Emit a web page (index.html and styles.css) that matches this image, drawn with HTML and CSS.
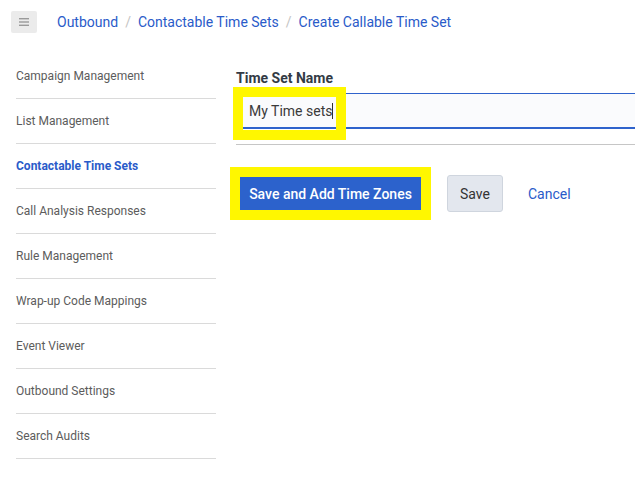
FILE: index.html
```html
<!DOCTYPE html>
<html>
<head>
<meta charset="utf-8">
<link rel="stylesheet" href="styles.css">
</head>
<body>
<header class="topbar">
  <button class="menu-btn" aria-label="menu">
    <svg width="10" height="8" viewBox="0 0 10 8"><rect x="0" y="0" width="10" height="1.4" fill="#9a9a9a"/><rect x="0" y="3.3" width="10" height="1.4" fill="#9a9a9a"/><rect x="0" y="6.6" width="10" height="1.4" fill="#9a9a9a"/></svg>
  </button>
  <nav class="crumbs">
    <a>Outbound</a><span class="sep">/</span><a>Contactable Time Sets</a><span class="sep">/</span><a>Create Callable Time Set</a>
  </nav>
</header>
<div class="layout">
  <aside class="sidebar">
    <div class="nav-item">Campaign Management</div>
    <div class="nav-item">List Management</div>
    <div class="nav-item active">Contactable Time Sets</div>
    <div class="nav-item">Call Analysis Responses</div>
    <div class="nav-item">Rule Management</div>
    <div class="nav-item">Wrap-up Code Mappings</div>
    <div class="nav-item">Event Viewer</div>
    <div class="nav-item">Outbound Settings</div>
    <div class="nav-item">Search Audits</div>
  </aside>
  <main class="main">
    <section class="form-section">
      <div class="label">Time Set Name</div>
      <div class="field">
        <span class="value">My Time sets<span class="caret"></span></span>
        <span class="hl-box"></span>
      </div>
    </section>
    <div class="actions">
      <button class="btn primary">Save and Add Time Zones</button>
      <button class="btn secondary">Save</button>
      <button class="btn link">Cancel</button>
    </div>
  </main>
</div>
</body>
</html>
```
FILE: styles.css
```css
* { box-sizing: border-box; }
body {
  margin: 0;
  font-family: Roboto, "Liberation Sans", sans-serif;
  background: #fff;
  color: #333;
  width: 635px;
  overflow: hidden;
}
.topbar {
  display: flex;
  align-items: center;
  height: 43px;
  padding: 0 11px;
  gap: 20px;
}
.menu-btn {
  width: 26px;
  height: 22px;
  border: none;
  border-radius: 2px;
  background: #ebebeb;
  display: flex;
  align-items: center;
  justify-content: center;
  padding: 0;
}
.menu-btn svg { display: block; }
.crumbs {
  font-size: 14px;
  color: #2a5bc9;
  display: flex;
  align-items: center;
  white-space: nowrap;
}
.crumbs a { color: #2a5bc9; }
.crumbs .sep {
  color: #c4c4c4;
  margin: 0 7px;
}
.layout {
  display: flex;
  padding-top: 11px;
  gap: 20px;
}
.sidebar {
  width: 216px;
  flex: none;
  padding-left: 16px;
}
.nav-item {
  height: 45px;
  display: flex;
  align-items: center;
  font-size: 12px;
  color: #5c5c5c;
  border-bottom: 1px solid #dadada;
}
.nav-item.active {
  color: #2a5bc9;
  font-weight: 700;
}
.main {
  flex: 1;
  min-width: 0;
  padding-top: 15px;
}
.form-section {
  padding-bottom: 15px;
  border-bottom: 1px solid #c6c6c6;
  margin-right: -20px;
}
.label {
  font-size: 14px;
  font-weight: 700;
  color: #333b45;
  line-height: 18px;
  margin-bottom: 6px;
}
.field {
  position: relative;
  height: 36px;
  border-top: 1px solid #2f63cc;
  border-bottom: 2px solid #2f63cc;
  background: #fafbfd;
  display: flex;
  align-items: center;
  padding-left: 13px;
}
.value {
  font-size: 14px;
  color: #3a3a3a;
  display: flex;
  align-items: center;
}
.caret {
  display: inline-block;
  width: 1px;
  height: 16px;
  background: #333;
}
.hl-box {
  position: absolute;
  left: -3px;
  top: -7px;
  width: 113px;
  height: 53px;
  border: 10px solid #fff700;
}
.actions {
  display: flex;
  align-items: center;
  margin-top: 30px;
  padding-left: 4px;
}
.btn {
  font-family: Roboto, "Liberation Sans", sans-serif;
  font-size: 14px;
  cursor: pointer;
}
.btn.primary {
  background: #2c62cc;
  color: #fff;
  border: none;
  height: 33px;
  width: 181px;
  padding: 0;
  font-weight: 500;
  outline: 10px solid #fff700;
  margin-right: 26px;
}
.btn.secondary {
  background: #e3e7ee;
  color: #333;
  border: 1px solid #cfd5de;
  border-radius: 3px;
  height: 37px;
  width: 56px;
  padding: 0;
  margin-right: 13px;
}
.btn.link {
  background: none;
  border: none;
  color: #2a5bc9;
  padding: 0 12px;
  height: 37px;
}
```
